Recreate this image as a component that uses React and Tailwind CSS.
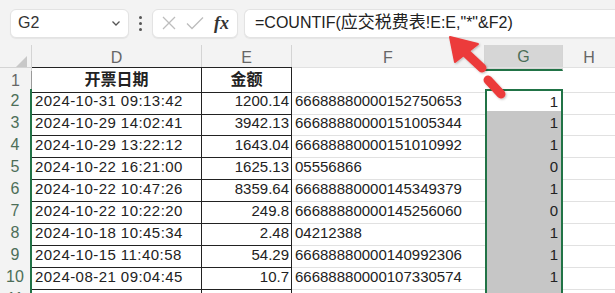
import React from "react";

const rows = [
  ["2024-10-31 09:13:42", "1200.14", "66688880000152750653", "1"],
  ["2024-10-29 14:02:41", "3942.13", "66688880000151005344", "1"],
  ["2024-10-29 13:22:12", "1643.04", "66688880000151010992", "1"],
  ["2024-10-22 16:21:00", "1625.13", "05556866", "0"],
  ["2024-10-22 10:47:26", "8359.64", "66688880000145349379", "1"],
  ["2024-10-22 10:22:20", "249.8", "66688880000145256060", "0"],
  ["2024-10-18 10:45:34", "2.48", "04212388", "1"],
  ["2024-10-15 11:40:58", "54.29", "66688880000140992306", "1"],
  ["2024-08-21 09:04:45", "10.7", "66688880000107330574", "1"],
  ["2024-07-30 10:45:07", "2185.63", "66688880000085230980", "1"],
];

const font = { fontFamily: '"Liberation Sans", "Noto Sans CJK SC", sans-serif' };
const grid = "grid grid-cols-[32px_170px_90px_193px_78px_52px]";

const Toolbar = () => (
  <div className="flex h-[45px] items-center gap-0 bg-[#f3f3f3] pt-[1px]">
    <div className="ml-[10px] flex h-[29px] w-[119px] items-center justify-between rounded-md border border-[#e3e3e3] bg-white pl-[7px] pr-[6px] shadow-[0_1px_1px_rgba(0,0,0,0.06)]">
      <span className="text-[16px] text-[#333]">G2</span>
      <svg width="12" height="12" viewBox="0 0 12 12" fill="none" stroke="#555" strokeWidth="1.3">
        <path d="M2.5 4.5 6 8l3.5-3.5" />
      </svg>
    </div>
    <div className="mx-[10px] flex flex-col gap-[3px]">
      <span className="h-[3px] w-[3px] rounded-full bg-[#555]" />
      <span className="h-[3px] w-[3px] rounded-full bg-[#555]" />
      <span className="h-[3px] w-[3px] rounded-full bg-[#555]" />
    </div>
    <div className="flex h-[29px] w-[86px] items-center gap-[9px] rounded-md border border-[#e3e3e3] bg-white pl-[8px] shadow-[0_1px_1px_rgba(0,0,0,0.06)]">
      <svg width="16" height="16" viewBox="0 0 16 16" stroke="#bdbdbd" strokeWidth="1.3">
        <path d="M2 2l12 12M14 2 2 14" />
      </svg>
      <svg width="18" height="16" viewBox="0 0 18 16" fill="none" stroke="#bdbdbd" strokeWidth="1.3">
        <path d="M1 8.5l5 5L17 2.5" />
      </svg>
      <span className="ml-[1px] text-[18px] font-bold italic text-[#333]" style={{ fontFamily: '"Liberation Serif", serif' }}>
        fx
      </span>
    </div>
    <div className="ml-[6px] flex h-[29px] flex-1 items-center rounded-l-md border border-r-0 border-[#e3e3e3] bg-white pl-[10px] shadow-[0_1px_1px_rgba(0,0,0,0.06)]">
      <span className="text-[16px] text-[#222]">
        =COUNTIF(<span className="text-[17px]">应交税费表</span>!E:E,"*"&amp;F2)
      </span>
    </div>
  </div>
);

const Header = () => (
  <div className={`${grid} h-[22px] bg-[#f3f3f3] text-[16px] text-[#666]`}>
    <div className="relative border-r border-[#d4d4d4]">
      <svg className="absolute bottom-[4px] right-[4px]" width="11" height="11" viewBox="0 0 11 11">
        <path d="M11 0v11H0z" fill="#c8c8c8" />
      </svg>
    </div>
    <div className="flex items-center justify-center border-r border-[#d4d4d4]">D</div>
    <div className="flex items-center justify-center border-r border-[#d4d4d4]">E</div>
    <div className="flex items-center justify-center border-r border-[#d4d4d4]">F</div>
    <div className="flex items-center justify-center border-b-2 border-r border-b-[#217346] border-r-[#d4d4d4] bg-[#d6d6d6] text-[#4c6e58]">G</div>
    <div className="flex items-center justify-center">H</div>
  </div>
);

const App = () => (
  <div className="relative h-[293px] w-[615px] overflow-hidden bg-white" style={font}>
    <Toolbar />
    <Header />
    <div className={`${grid} h-[22px] text-[15px] text-[#222]`}>
      <div className="flex items-center justify-center border-r border-t border-r-[#9a9a9a] border-t-[#d4d4d4] bg-[#f3f3f3] text-[16px] text-[#666]">1</div>
      <div className="flex items-center justify-center border-b border-r border-t border-[#222] text-[16px] font-bold">开票日期</div>
      <div className="flex items-center justify-center border-b border-r border-t border-[#222] text-[16px] font-bold">金额</div>
      <div className="border-b border-t border-[#e1e1e1]" />
      <div className="border-b border-t border-[#e1e1e1]" />
      <div className="border-b border-t border-[#e1e1e1]" />
    </div>
    {rows.map((r, i) => (
      <div key={i} className={`${grid} h-[22px] text-[15px] text-[#222]`}>
        <div className="flex items-center justify-center border-b border-r-2 border-b-[#e1e1e1] border-r-[#217346] bg-[#f3f3f3] text-[16px] text-[#4c6e58]">
          {i + 2}
        </div>
        <div className="flex items-center border-b border-r border-[#222] pl-[3px] tracking-[0.45px]">{r[0]}</div>
        <div className="flex items-center justify-end border-b border-r border-[#222] pr-[2px]">{r[1]}</div>
        <div className="flex items-center border-b border-[#e1e1e1] pl-[3px]">{r[2]}</div>
        <div
          className={`flex items-center justify-end border-x-2 border-b border-x-[#217346] pr-[3px] ${
            i === 0 ? "border-t-2 border-t-[#217346] border-b-[#e1e1e1] bg-white" : "border-b-[#b4b4b4] bg-[#c6c6c6]"
          }`}
        >
          {r[3]}
        </div>
        <div className="border-b border-[#e1e1e1]" />
      </div>
    ))}
    <svg className="pointer-events-none absolute left-0 top-0" width="615" height="293" viewBox="0 0 615 293">
      <defs>
        <filter id="sh" x="-20%" y="-20%" width="140%" height="140%">
          <feDropShadow dx="1" dy="1" stdDeviation="1.2" floodColor="#000" floodOpacity="0.25" />
        </filter>
      </defs>
      <g fill="#ec3b3b" stroke="#ec3b3b" filter="url(#sh)">
        <path d="M450 37 L455 62 L478 44 Z" strokeLinejoin="round" strokeWidth="2" />
        <line x1="466" y1="53" x2="482" y2="68" strokeWidth="9" strokeLinecap="round" />
        <line x1="488" y1="80" x2="501" y2="94" strokeWidth="9" strokeLinecap="round" />
      </g>
    </svg>
  </div>
);

export default App;
